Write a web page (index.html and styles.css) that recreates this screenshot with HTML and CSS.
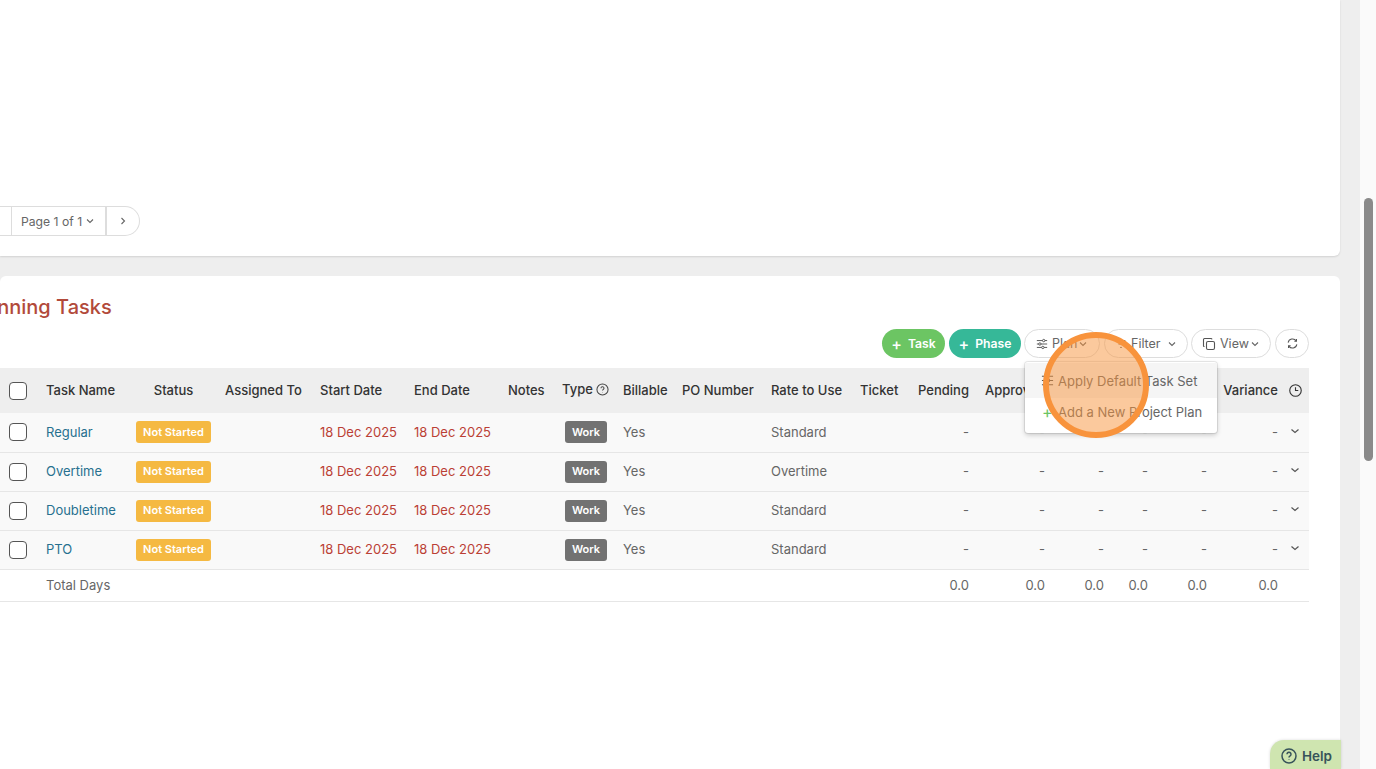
FILE: index.html
```html
<!DOCTYPE html>
<html lang="en">
<head>
<meta charset="utf-8">
<title>Planning Tasks</title>
<link rel="stylesheet" href="styles.css">
</head>
<body>
<div class="page">
  <main class="main">
    <section class="card card-top">
      <nav class="pager">
        <span class="pager-seg pager-first"></span>
        <span class="pager-seg pager-page">Page 1 of 1 <svg class="chev-sm" viewBox="0 0 12 12"><path d="M3 4.500 6 7.500 9 4.500"/></svg></span>
        <span class="pager-seg pager-next"><svg class="chev-sm" viewBox="0 0 12 12"><path d="M4.500 3 7.500 6 4.500 9"/></svg></span>
      </nav>
    </section>
    <section class="card card-tasks">
      <h2 class="title">Planning Tasks</h2>
      <div class="toolbar">
        <button class="btn btn-task"><span class="plus">+</span>Task</button>
        <button class="btn btn-phase"><span class="plus">+</span>Phase</button>
        <div class="plan-wrap">
          <button class="btn btn-line btn-plan">
            <svg class="ico" viewBox="0 0 14 14"><path d="M1 3h12M1 7h12M1 11h12"/><circle cx="9" cy="3" r="1.400"/><circle cx="4.500" cy="7" r="1.400"/><circle cx="8" cy="11" r="1.400"/></svg>Plan<svg class="chev-sm chev-tight" viewBox="0 0 12 12"><path d="M3 4.500 6 7.500 9 4.500"/></svg>
          </button>
          <div class="menu">
            <div class="menu-item menu-hover">
              <svg class="ico ico-menu" viewBox="0 0 14 14"><path d="M1 2.500h12M1 7h12M1 11.500h12"/><path d="M6 1v3M9 5.500v3M5 10v3"/></svg>Apply Default Task Set
            </div>
            <div class="menu-item menu-add">
              <span class="menu-plus">+</span>Add a New Project Plan
            </div>
          </div>
        </div>
        <button class="btn btn-line btn-filter">
          <svg class="ico" viewBox="0 0 14 14"><path d="M2 3h10M4 7h6M6 11h2"/></svg>Filter<svg class="chev-sm chev-gap" viewBox="0 0 12 12"><path d="M3 4.500 6 7.500 9 4.500"/></svg>
        </button>
        <button class="btn btn-line btn-view">
          <svg class="ico ico-lg" viewBox="0 0 14 14"><rect x="4.500" y="4.500" width="8" height="8" rx="1.500"/><path d="M2.500 9.500H2A1 1 0 0 1 1.500 9V2.500a1 1 0 0 1 1-1H9a1 1 0 0 1 1 .8"/></svg>View<svg class="chev-sm chev-tight" viewBox="0 0 12 12"><path d="M3 4.500 6 7.500 9 4.500"/></svg>
        </button>
        <button class="btn btn-line btn-refresh">
          <svg class="ico ico-sync" viewBox="0 0 14 14"><path d="M2.300 6A4.800 4.800 0 0 1 11 4.200M11.700 8A4.800 4.800 0 0 1 3 9.800"/><path d="M11.300 2.200V4.500H9M2.700 11.800V9.500H5"/></svg>
        </button>
      </div>
      <table class="grid">
        <colgroup>
          <col class="c-check"><col class="c-name"><col class="c-status"><col class="c-assigned"><col class="c-date"><col class="c-date"><col class="c-notes"><col class="c-type"><col class="c-bill"><col class="c-po"><col class="c-rate"><col class="c-ticket"><col class="c-pending"><col class="c-approved"><col class="c-n3"><col class="c-n4"><col class="c-n5"><col class="c-var"><col class="c-end">
        </colgroup>
        <thead>
          <tr>
            <th class="cell-check"><span class="box"></span></th>
            <th>Task Name</th>
            <th class="th-status">Status</th>
            <th>Assigned To</th>
            <th>Start Date</th>
            <th>End Date</th>
            <th>Notes</th>
            <th class="th-type">Type <svg class="ico-q" viewBox="0 0 14 14"><circle cx="7" cy="7" r="6"/><path d="M5.400 5.600a1.600 1.600 0 1 1 2.500 1.300c-.6.400-.9.700-.9 1.300"/><path d="M7 10v.3"/></svg></th>
            <th>Billable</th>
            <th>PO Number</th>
            <th>Rate to Use</th>
            <th>Ticket</th>
            <th class="num">Pending</th>
            <th class="num">Approved</th>
            <th class="num">Actual</th>
            <th class="num">Paid</th>
            <th class="num">Budget</th>
            <th class="num num-var">Variance</th>
            <th class="cell-end"><svg class="ico-clock" viewBox="0 0 14 14"><circle cx="7" cy="7" r="6.200"/><path d="M7 3.500V7h3"/></svg></th>
          </tr>
        </thead>
        <tbody>
          <tr>
            <td class="cell-check"><span class="box"></span></td>
            <td><a class="task-link">Regular</a></td>
            <td><span class="badge badge-status">Not Started</span></td>
            <td></td>
            <td class="date">18 Dec 2025</td>
            <td class="date">18 Dec 2025</td>
            <td></td>
            <td class="cell-type"><span class="badge badge-type">Work</span></td>
            <td>Yes</td>
            <td></td>
            <td>Standard</td>
            <td></td>
            <td class="num">-</td><td class="num">-</td><td class="num">-</td><td class="num">-</td><td class="num">-</td><td class="num num-var">-</td>
            <td class="cell-end"><svg class="chev-row" viewBox="0 0 12 12"><path d="M2.500 4.500 6 7.500 9.500 4.500"/></svg></td>
          </tr>
          <tr>
            <td class="cell-check"><span class="box"></span></td>
            <td><a class="task-link">Overtime</a></td>
            <td><span class="badge badge-status">Not Started</span></td>
            <td></td>
            <td class="date">18 Dec 2025</td>
            <td class="date">18 Dec 2025</td>
            <td></td>
            <td class="cell-type"><span class="badge badge-type">Work</span></td>
            <td>Yes</td>
            <td></td>
            <td>Overtime</td>
            <td></td>
            <td class="num">-</td><td class="num">-</td><td class="num">-</td><td class="num">-</td><td class="num">-</td><td class="num num-var">-</td>
            <td class="cell-end"><svg class="chev-row" viewBox="0 0 12 12"><path d="M2.500 4.500 6 7.500 9.500 4.500"/></svg></td>
          </tr>
          <tr>
            <td class="cell-check"><span class="box"></span></td>
            <td><a class="task-link">Doubletime</a></td>
            <td><span class="badge badge-status">Not Started</span></td>
            <td></td>
            <td class="date">18 Dec 2025</td>
            <td class="date">18 Dec 2025</td>
            <td></td>
            <td class="cell-type"><span class="badge badge-type">Work</span></td>
            <td>Yes</td>
            <td></td>
            <td>Standard</td>
            <td></td>
            <td class="num">-</td><td class="num">-</td><td class="num">-</td><td class="num">-</td><td class="num">-</td><td class="num num-var">-</td>
            <td class="cell-end"><svg class="chev-row" viewBox="0 0 12 12"><path d="M2.500 4.500 6 7.500 9.500 4.500"/></svg></td>
          </tr>
          <tr>
            <td class="cell-check"><span class="box"></span></td>
            <td><a class="task-link">PTO</a></td>
            <td><span class="badge badge-status">Not Started</span></td>
            <td></td>
            <td class="date">18 Dec 2025</td>
            <td class="date">18 Dec 2025</td>
            <td></td>
            <td class="cell-type"><span class="badge badge-type">Work</span></td>
            <td>Yes</td>
            <td></td>
            <td>Standard</td>
            <td></td>
            <td class="num">-</td><td class="num">-</td><td class="num">-</td><td class="num">-</td><td class="num">-</td><td class="num num-var">-</td>
            <td class="cell-end"><svg class="chev-row" viewBox="0 0 12 12"><path d="M2.500 4.500 6 7.500 9.500 4.500"/></svg></td>
          </tr>
        </tbody>
        <tfoot>
          <tr>
            <td></td>
            <td colspan="11">Total Days</td>
            <td class="num">0.0</td><td class="num">0.0</td><td class="num">0.0</td><td class="num">0.0</td><td class="num">0.0</td><td class="num num-var">0.0</td>
            <td></td>
          </tr>
        </tfoot>
      </table>
    </section>
    <button class="help"><svg class="help-ico" viewBox="0 0 16 16"><circle cx="8" cy="8" r="7"/><path d="M6 6.200a2 2 0 1 1 3.100 1.700c-.8.500-1.100.9-1.100 1.700"/><path d="M8 11.500v.4"/></svg>Help</button>
  </main>
  <aside class="scrollbar"><div class="thumb"></div></aside>
</div>
<div class="spotlight"></div>
</body>
</html>
```
FILE: styles.css
```css
* { box-sizing: border-box; }
html, body { margin: 0; height: 100%; overflow: hidden; }
body { font-family: Inter, "Liberation Sans", sans-serif; font-size: 13px; color: #666; background: #eee; }
.page { display: flex; height: 769px; }
.main { position: relative; width: 1360px; padding-right: 20px; display: flex; flex-direction: column; gap: 20px; overflow: hidden; }
.card { background: #fff; flex: none; }
.card-top { height: 256px; display: flex; align-items: flex-end; padding-bottom: 20px; border-radius: 0 0 6px 0; box-shadow: 0 1px 2px rgba(0,0,0,.12); }
.card-tasks { height: 493px; padding: 19px 31px 0 0; border-radius: 6px 6px 0 0; }

.pager { display: flex; height: 30px; border: 1px solid #ddd; border-left: 0; border-radius: 0 15px 15px 0; font-size: 12.200px; color: #666; }
.pager-seg { display: flex; align-items: center; justify-content: center; }
.pager-first { width: 12px; border-right: 1px solid #ddd; }
.pager-page { width: 95px; gap: 2px; border-right: 2px solid #ddd; }
.pager-next { width: 32px; }
.chev-sm { width: 12px; height: 12px; fill: none; stroke: #666; stroke-width: 1.100; flex: none; }

.title { margin: 0 0 10px -32px; height: 24px; font-size: 20px; line-height: 24px; font-weight: 500; color: #b24a3a; white-space: nowrap; }

.toolbar { display: flex; justify-content: flex-end; height: 30px; margin-bottom: 9px; }
.btn { height: 29px; border: 0; border-radius: 15px; font: inherit; font-size: 12.200px; display: flex; align-items: center; justify-content: center; padding: 0; }
.btn-task { width: 63px; margin-right: 4px; background: #6cc563; color: #fff; font-weight: 600; }
.btn-phase { width: 72px; margin-right: 3px; background: #36b898; color: #fff; font-weight: 600; }
.plus { font-size: 16px; font-weight: 500; margin-right: 6px; line-height: 1; }
.btn-line { background: #fff; border: 1px solid #ddd; color: #666; gap: 4px; justify-content: flex-start; font-size: 12.500px; }
.plan-wrap { position: relative; margin-right: 4px; }
.btn-plan { width: 76px; padding-left: 11px; }
.btn-filter { width: 84px; margin-right: 3px; padding-left: 10px; }
.chev-gap { margin-left: 1px; }
.chev-tight { margin-left: -4px; }
.btn-view { width: 80px; margin-right: 4px; padding-left: 10px; }
.btn-refresh { width: 34px; justify-content: center; }
.ico { width: 12px; height: 12px; fill: #fff; stroke: #555; stroke-width: 1.100; flex: none; }
.ico-lg { width: 14px; height: 14px; fill: none; }
.ico-sync { width: 13px; height: 13px; fill: none; }

.menu { position: absolute; top: 33px; left: 1px; z-index: 5; width: 192px; height: 71px; padding-top: 1px; background: #fff; border-radius: 3px; box-shadow: 0 0 0 1px rgba(0,0,0,.08), 0 2px 5px rgba(0,0,0,.2); }
.menu-item { display: flex; align-items: center; height: 28px; padding-left: 17px; font-size: 13px; color: #666; white-space: nowrap; }
.ico-menu { width: 13px; height: 13px; margin-right: 4px; margin-left: -1px; }
.menu-hover { height: 35px; background: #f5f5f5; }
.menu-plus { width: 16px; color: #6cc563; font-size: 16px; line-height: 1; }

.grid { width: 1309px; table-layout: fixed; border-collapse: collapse; }
.c-check { width: 46px; } .c-name { width: 90px; } .c-status { width: 89px; } .c-assigned { width: 95px; }
.c-date { width: 94px; } .c-notes { width: 54px; } .c-type { width: 61px; } .c-bill { width: 59px; }
.c-po { width: 89px; } .c-rate { width: 89px; } .c-ticket { width: 58px; } .c-pending { width: 67px; }
.c-approved { width: 76px; } .c-n3 { width: 59px; } .c-n4 { width: 44px; } .c-n5 { width: 59px; }
.c-var { width: 63px; } .c-end { width: 23px; }

th { height: 45px; padding: 0 0 1px; background: #eee; color: #333; font-weight: 500; text-align: left; white-space: nowrap; overflow: hidden; }
td { height: 39px; padding: 0 0 1px; background: #f9f9f9; border-bottom: 1px solid #e6e6e6; white-space: nowrap; }
tfoot td { height: 32px; background: #fff; padding-bottom: 0; }
.num { text-align: right; padding-right: 16px; }
.num-var { padding-right: 8px; }
th.num { overflow: visible; }
.cell-check { padding-left: 9px; }
.cell-end { padding-left: 3px; }
.th-status { text-align: center; padding-right: 14px; }
.th-type { padding-bottom: 3px; }
.cell-type { padding-left: 3px; }
.box { display: block; width: 18px; height: 18px; margin-top: 1px; background: #fff; border: 1px solid #555; border-radius: 4px; }
.task-link { color: #27708f; }
.date { color: #bb3f35; }
.badge { display: inline-flex; align-items: center; justify-content: center; height: 22px; margin-top: 1px; padding-bottom: 1px; border-radius: 3px; color: #fff; font-size: 11px; font-weight: 600; vertical-align: middle; }
.badge-status { width: 75px; background: #f5b942; }
.badge-type { width: 42px; background: #727272; }
.ico-q { width: 13px; height: 13px; vertical-align: -2px; fill: none; stroke: #444; stroke-width: 1.100; }
.ico-clock { display: block; width: 13px; height: 13px; fill: none; stroke: #333; stroke-width: 1.200; }
.chev-row { display: block; width: 12px; height: 12px; margin-top: -2px; fill: none; stroke: #555; stroke-width: 1.200; }

.help { position: absolute; right: 19px; bottom: 0; width: 71px; height: 29px; display: flex; align-items: center; justify-content: center; gap: 5px; padding: 2px 0 0 2px; border: 0; border-radius: 14px 0 0 0; background: #cfe5b0; color: #37535a; font: inherit; font-size: 13.500px; font-weight: 600; box-shadow: 0 0 3px rgba(0,0,0,.15); }
.help-ico { width: 16px; height: 16px; fill: none; stroke: #37535a; stroke-width: 1.500; }

.scrollbar { width: 16px; background: #fafafa; padding: 198px 0 0 4px; }
.thumb { width: 9px; height: 263px; border-radius: 5px; background: #8a8a8a; }

.spotlight { position: absolute; left: 1043px; top: 332px; z-index: 10; width: 106px; height: 106px; border-radius: 50%; border: 6px solid #f8933c; background: rgba(248,147,60,.5); }
```
